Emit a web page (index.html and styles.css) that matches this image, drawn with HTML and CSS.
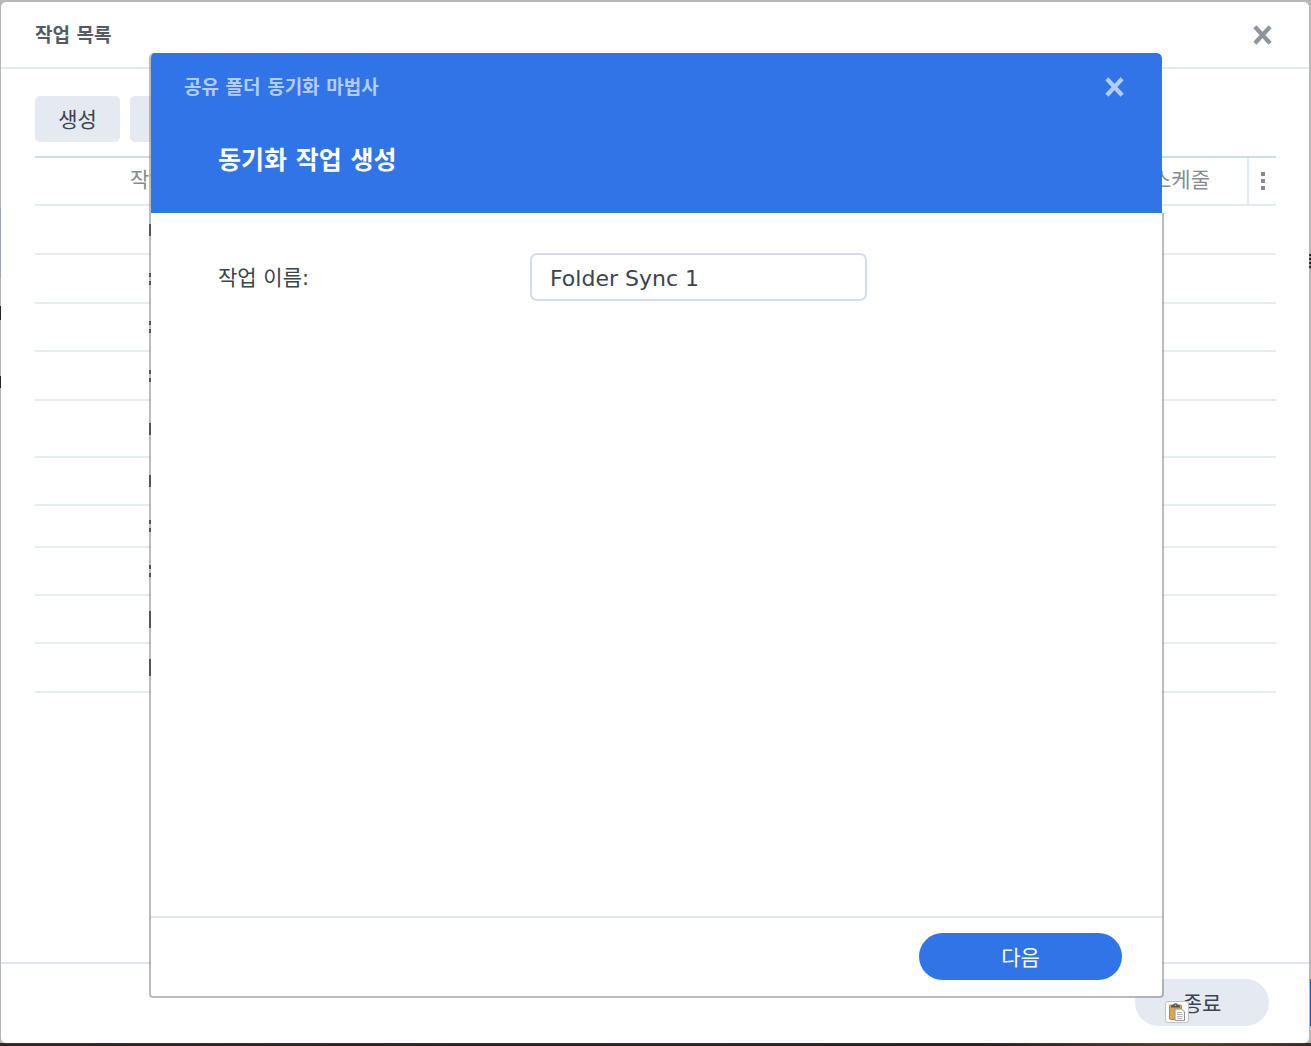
FILE: index.html
```html
<!DOCTYPE html>
<html lang="ko">
<head>
<meta charset="utf-8">
<meta name="viewport" content="width=device-width, initial-scale=1">
<title>작업 목록</title>
<link rel="stylesheet" href="styles.css">
</head>
<body class="desktop">
<main class="window">
  <header class="window-header">
    <h1 class="window-title">작업 목록</h1>
    <button class="close" type="button" aria-label="닫기">
      <svg width="20" height="20" viewBox="0 0 20 20" aria-hidden="true"><path d="M3.300 3.300l12.400 13.400M15.700 3.300L3.300 16.700" fill="none" stroke="currentColor" stroke-width="4.200" stroke-linecap="square"/></svg>
    </button>
  </header>
  <section class="window-body">
    <div class="toolbar">
      <button class="tool" type="button">생성</button>
      <button class="tool" type="button" aria-label="편집"></button>
    </div>
    <table class="tasks">
      <thead>
        <tr>
          <th class="col-name">작업</th>
          <th class="col-schedule">스케줄</th>
          <th class="col-menu"><button class="menu" type="button" aria-label="열 메뉴"><svg width="6" height="18" viewBox="0 0 6 18" aria-hidden="true"><path d="M1 0h4v4H1zM1 7h4v4H1zM1 14h4v4H1z" fill="currentColor"/></svg></button></th>
        </tr>
      </thead>
      <tbody>
        <tr><td class="mark"></td><td></td><td></td></tr>
        <tr><td class="mark split"></td><td></td><td></td></tr>
        <tr class="snug"><td class="mark split"></td><td></td><td></td></tr>
        <tr><td class="mark split"></td><td></td><td></td></tr>
        <tr class="tall"><td class="mark"></td><td></td><td></td></tr>
        <tr class="snug"><td class="mark"></td><td></td><td></td></tr>
        <tr class="short"><td class="mark split"></td><td></td><td></td></tr>
        <tr class="snug"><td class="mark split"></td><td></td><td></td></tr>
        <tr class="snug"><td class="mark long"></td><td></td><td></td></tr>
        <tr><td class="mark long"></td><td></td><td></td></tr>
      </tbody>
    </table>
  </section>
  <footer class="window-footer">
    <button class="pill exit" type="button">종료</button>
  </footer>

  <section class="dialog" role="dialog" aria-labelledby="dialog-heading">
    <header class="dialog-header">
      <div class="dialog-bar">
        <p class="dialog-title">공유 폴더 동기화 마법사</p>
        <button class="close close-light" type="button" aria-label="닫기">
          <svg width="20" height="20" viewBox="0 0 20 20" aria-hidden="true"><path d="M3.300 3.300l12.400 13.400M15.700 3.300L3.300 16.700" fill="none" stroke="currentColor" stroke-width="4.200" stroke-linecap="square"/></svg>
        </button>
      </div>
      <h2 class="dialog-heading" id="dialog-heading">동기화 작업 생성</h2>
    </header>
    <form class="dialog-form">
      <div class="field">
        <label class="field-label" for="task-name">작업 이름:</label>
        <input class="field-input" id="task-name" type="text" value="Folder Sync 1">
      </div>
      <div class="dialog-footer">
        <button class="pill next" type="button">다음</button>
      </div>
    </form>
  </section>

  <button class="paste" type="button" aria-label="붙여넣기 옵션">
    <svg width="16" height="18" viewBox="0 0 16 18" aria-hidden="true">
      <rect x="0.500" y="2" width="12" height="14.500" rx="1" fill="#dca552" stroke="#bd8539"/>
      <path d="M2 4.500V3q0-1 2-1Q4.500.3 6.500.3T9 2q2 0 2 1v1.500z" fill="#53575a"/>
      <circle cx="6.500" cy="2.200" r="0.800" fill="#c9c9c9"/>
      <path d="M6 6h6.500L15.500 9v8.500H6z" fill="#fff" stroke="#8f9296"/>
      <path d="M8 9.500h5M8 11.500h5.500M8 13.500h5.500M8 15.500h5.500" stroke="#b4b7ba"/>
    </svg>
  </button>
</main>
</body>
</html>
```
FILE: styles.css
```css
* { box-sizing: border-box; }

body, h1, h2, p { margin: 0; }

button, input { font: inherit; color: inherit; }

button { border: 0; padding: 0; background: none; cursor: pointer; }

.desktop {
  min-height: 100vh;
  padding: 2px 2px 3px 1px;
  display: flex;
  font-family: "DejaVu Sans", "Noto Sans CJK KR", sans-serif;
  font-size: 21px;
  color: #3b444e;
  background:
    linear-gradient(#15171c, #15171c) 0 306px / 2px 14px no-repeat,
    linear-gradient(#15171c, #15171c) 0 376px / 2px 12px no-repeat,
    linear-gradient(#9aa2bb, #9aa2bb) 0 208px / 2px 70px no-repeat,
    repeating-linear-gradient(#222 0 2px, #999 2px 4px) 100% 254px / 2px 15px no-repeat,
    linear-gradient(#1d56b8, #1d56b8) 100% 979px / 1px 47px no-repeat,
    linear-gradient(90deg, #35251f, #2e1f1a 75%, #5b3c22 90%, #43291a) 0 100% / 100% 3px no-repeat,
    #b9b9b9;
}

.window {
  position: relative;
  flex: 1;
  display: flex;
  flex-direction: column;
  border-radius: 5px;
  background: #fff;
  box-shadow: 0 0 1px #aaa;
}

.window-header {
  height: 67px;
  padding: 0 36px 0 34px;
  display: flex;
  align-items: center;
  justify-content: space-between;
  border-bottom: 2px solid #e3e9f2;
}

.window-title {
  font-size: 19px;
  line-height: 28px;
  font-weight: 700;
  color: #535b64;
}

.close { width: 20px; height: 20px; color: #8d949c; }
.close svg { display: block; }
.close-light { color: #b3cdf8; }

.window-body { flex: 1; padding: 27px 33px 0 34px; }

.toolbar { display: flex; gap: 10px; margin-bottom: 14px; }

.tool {
  width: 85px;
  height: 46px;
  padding-bottom: 2px;
  border-radius: 5px;
  background: #e5eaf2;
}

.tasks {
  width: 100%;
  table-layout: fixed;
  border-collapse: separate;
  border-spacing: 0;
  border-top: 2px solid #cfdbe9;
}

.tasks th {
  height: 48px;
  padding: 0 0 2px;
  font-weight: 400;
  line-height: 28px;
  color: #858b92;
  border-bottom: 2px solid #e3ebf3;
}

.tasks .col-name { padding-left: 95px; text-align: left; }
.tasks .col-schedule { padding-right: 37px; text-align: right; border-right: 2px solid #e3ebf3; }
.tasks .col-menu { width: 27px; padding: 0; }

.menu { display: block; margin: 0 auto; color: #858b92; }
.menu svg { display: block; }

.tasks td {
  height: 49px;
  padding: 0;
  border-bottom: 2px solid #e6edf2;
}

.tasks .snug td { height: 48px; }
.tasks .short td { height: 42px; }
.tasks .tall td { height: 57px; }

.mark::before {
  content: "";
  display: block;
  width: 2px;
  height: 12px;
  margin-left: 114px;
  background: #2e333b;
}

.mark.split::before { background: linear-gradient(#2e333b 4px, transparent 4px 8px, #2e333b 8px); }
.mark.long::before { height: 17px; }

.window-footer {
  height: 81px;
  padding: 15px 40px 0 0;
  display: flex;
  justify-content: flex-end;
  border-top: 2px solid #e0e6f1;
}

.pill { height: 47px; padding-bottom: 2px; border-radius: 24px; }
.exit { width: 134px; background: #e5eaf2; }
.next { width: 203px; background: #3074e8; color: #fff; }

.dialog {
  position: absolute;
  top: 51px;
  right: 145px;
  bottom: 45px;
  left: 148px;
  display: flex;
  flex-direction: column;
}

.dialog-header {
  height: 160px;
  margin-right: 2px;
  padding: 20px 37px 0 33px;
  border-left: 2px solid rgb(120 120 120 / 50%);
  border-radius: 5px 5px 0 0;
  background: #3074e8;
  background-clip: padding-box;
}

.dialog-bar { display: flex; align-items: center; justify-content: space-between; }

.dialog-title {
  font-size: 19px;
  line-height: 28px;
  font-weight: 700;
  color: #b3cdf8;
}

.dialog-heading {
  margin: 40px 0 0 34px;
  font-size: 25px;
  line-height: 40px;
  font-weight: 700;
  color: #fff;
}

.dialog-form {
  flex: 1;
  display: flex;
  flex-direction: column;
  justify-content: space-between;
  border: 2px solid rgb(120 120 120 / 50%);
  border-top: 0;
  border-radius: 0 0 4px 4px;
  background: #fff;
  background-clip: padding-box;
}

.field {
  padding: 40px 67px 0;
  display: grid;
  grid-template-columns: 312px 337px;
  align-items: center;
}

.field-label { padding-bottom: 2px; }

.field-input {
  width: 100%;
  height: 48px;
  padding: 2px 18px 0;
  font-size: 22px;
  border: 2px solid #d3dee9;
  border-radius: 7px;
  outline: 0;
  background: #fff;
}

.dialog-footer {
  height: 80px;
  padding: 15px 40px 0 0;
  display: flex;
  justify-content: flex-end;
  border-top: 2px solid #e0e6f1;
}

.paste {
  position: absolute;
  right: 120px;
  bottom: 20px;
  width: 24px;
  height: 22px;
  display: grid;
  place-items: center;
  border: 1px solid #bfc1c4;
  border-radius: 3px;
  background: #fdfdfd;
}
```
